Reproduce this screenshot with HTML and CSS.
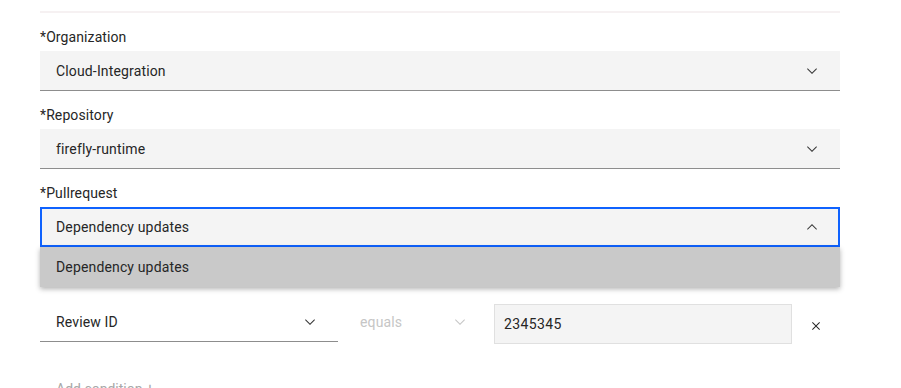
FILE: index.html
```html
<!DOCTYPE html>
<html>
<head>
<meta charset="utf-8">
<link rel="stylesheet" href="styles.css">
</head>
<body>
<div class="page">
  <div class="divider"></div>

  <div class="field-group">
    <div class="label">*Organization</div>
    <div class="select">
      <span class="value">Cloud-Integration</span>
      <svg class="chev" viewBox="0 0 16 16" width="16" height="16"><path d="M8 11L3 6 3.7 5.3 8 9.6 12.3 5.3 13 6z"/></svg>
    </div>
  </div>

  <div class="field-group">
    <div class="label">*Repository</div>
    <div class="select">
      <span class="value">firefly-runtime</span>
      <svg class="chev" viewBox="0 0 16 16" width="16" height="16"><path d="M8 11L3 6 3.7 5.3 8 9.6 12.3 5.3 13 6z"/></svg>
    </div>
  </div>

  <div class="field-group open-group">
    <div class="label">*Pullrequest</div>
    <div class="select open">
      <span class="value">Dependency updates</span>
      <svg class="chev" viewBox="0 0 16 16" width="16" height="16"><path d="M8 5L13 10 12.3 10.7 8 6.4 3.7 10.7 3 10z"/></svg>
    </div>
    <div class="menu">
      <div class="menu-item">Dependency updates</div>
    </div>
  </div>

  <div class="condition">
    <div class="cond-select">
      <span class="value">Review ID</span>
      <svg class="chev" viewBox="0 0 16 16" width="16" height="16"><path d="M8 11L3 6 3.7 5.3 8 9.6 12.3 5.3 13 6z"/></svg>
    </div>
    <div class="cond-op">
      <span class="value">equals</span>
      <svg class="chev" viewBox="0 0 16 16" width="16" height="16"><path d="M8 11L3 6 3.7 5.3 8 9.6 12.3 5.3 13 6z"/></svg>
    </div>
    <div class="cond-input">2345345</div>
    <div class="cond-remove">
      <svg viewBox="0 0 16 16" width="16" height="16"><path d="M12 4.7L11.3 4 8 7.3 4.7 4 4 4.7 7.3 8 4 11.3 4.7 12 8 8.7 11.3 12 12 11.3 8.7 8z"/></svg>
    </div>
  </div>

  <div class="add-condition">Add condition +</div>
</div>
</body>
</html>
```

FILE: styles.css
```css
html, body {
  margin: 0;
  padding: 0;
  background: #ffffff;
  font-family: Roboto, "Liberation Sans", sans-serif;
  font-size: 14px;
  color: #161616;
  overflow: hidden;
}

.page {
  width: 800px;
  padding: 11px 40px 0 40px;
  display: flex;
  flex-direction: column;
}

.divider {
  height: 2px;
  background: #f6f1f2;
  margin-bottom: 15px;
}

.field-group {
  display: flex;
  flex-direction: column;
  margin-bottom: 15px;
}

.label {
  line-height: 18px;
  height: 18px;
  margin-bottom: 5px;
  color: #262626;
  letter-spacing: 0.1px;
}

.select {
  height: 39px;
  border-bottom: 1px solid #8d8d8d;
  background: #f4f4f4;
  display: flex;
  align-items: center;
  justify-content: space-between;
  padding: 0 20px 0 16px;
  color: #262626;
  letter-spacing: 0.15px;
}

.select.open {
  height: 36px;
  border: 2px solid #0f62fe;
  padding: 0 18px 0 14px;
}

.chev {
  fill: #393939;
  flex: none;
}

.open-group {
  position: relative;
  margin-bottom: 0;
}

.menu {
  height: 40px;
  background: #c9c9c9;
  box-shadow: 0 2px 5px rgba(0, 0, 0, 0.3);
  display: flex;
  align-items: center;
  padding: 0 16px;
  position: relative;
  z-index: 2;
}

.menu-item {
  color: #262626;
  letter-spacing: 0.15px;
}

.condition {
  display: flex;
  align-items: flex-start;
  gap: 6px;
  margin-top: 15px;
}

.cond-select {
  width: 298px;
  box-sizing: border-box;
  height: 40px;
  border-bottom: 1px solid #8d8d8d;
  display: flex;
  align-items: center;
  justify-content: space-between;
  padding: 0 20px 0 16px;
  color: #262626;
  letter-spacing: 0.15px;
}

.cond-op {
  width: 144px;
  box-sizing: border-box;
  height: 40px;
  display: flex;
  align-items: center;
  justify-content: space-between;
  padding: 0 20px 0 16px;
  color: #c6c6c6;
  letter-spacing: 0.15px;
}

.cond-op .chev {
  fill: #c6c6c6;
}

.cond-input {
  width: 298px;
  box-sizing: border-box;
  height: 40px;
  margin-top: 2px;
  background: #f4f4f4;
  border: 1px solid #e0e0e0;
  display: flex;
  align-items: center;
  padding: 0 9px;
  color: #262626;
  letter-spacing: 0.4px;
}

.cond-remove {
  width: 48px;
  height: 40px;
  margin-top: 4px;
  margin-left: -6px;
  display: flex;
  align-items: center;
  justify-content: center;
}

.cond-remove svg {
  fill: #262626;
}

.add-condition {
  margin-top: 34px;
  padding-left: 16px;
  color: #a8a8a8;
  line-height: 18px;
}
```
